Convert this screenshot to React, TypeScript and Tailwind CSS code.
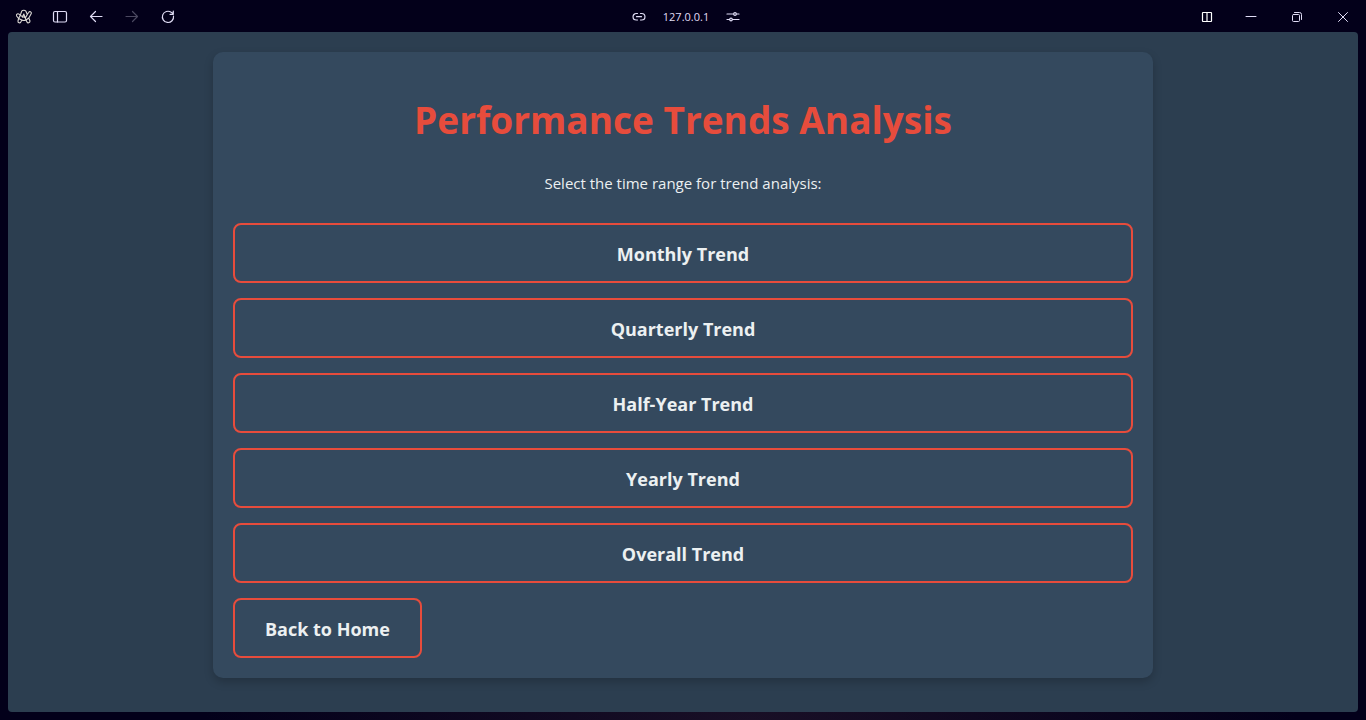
const trends = ['Monthly Trend', 'Quarterly Trend', 'Half-Year Trend', 'Yearly Trend', 'Overall Trend'];

const chromeButton = 'flex h-8 w-9 items-center justify-center';
const windowButton = 'flex h-8 w-[46px] items-center justify-center';
const linkButton =
  'rounded-lg border-2 border-[#e74c3c] text-center text-[18px] leading-6 font-bold text-[#ecf0f1] px-[30px] pt-[17px] pb-[15px] bg-[#34495e]';

function Icon({ size = 16, className = '', children }: { size?: number; className?: string; children: React.ReactNode }) {
  return (
    <svg width={size} height={size} viewBox={`0 0 ${size} ${size}`} fill="none" stroke="currentColor" strokeWidth="1.2" strokeLinecap="round" strokeLinejoin="round" className={className} aria-hidden="true">
      {children}
    </svg>
  );
}

export default function App() {
  return (
    <div className="flex min-h-screen flex-col bg-[#03001a] bg-[radial-gradient(ellipse_40%_20%_at_55%_100%,#190f26,#03001a)] font-['Open_Sans',sans-serif] text-[#ecf0f1]">
      <header className="grid h-8 grid-cols-3 items-center text-[#e0dcf5]">
        <nav className="flex items-center pt-px pl-[6px]">
          <button aria-label="Menu" className={chromeButton + ' text-[#dedad6]'}>
            <Icon size={18}>
              <path strokeWidth="1.1" d="M6.800 3C7.500 2 10 2 10.800 3L12.300 6.500 13.800 4.300C14.500 3 16.800 3.600 16.300 5.600L13.800 10 15 13C15 15 12.600 15.500 12 14L11 12C9.500 12.600 8 12.600 6.800 12L5.800 14C5 15.500 2.600 15 3 13L3.600 10.500 1.600 8C1 6 3 5.200 4 6.200L5.200 7.400ZM5.200 7.400L3.600 10.500M5.200 7.400L10.500 9.800 12.300 6.500M8.800 6L7.400 9.300M8.800 6L11 12M3.600 10.500L6.800 12M11 12L13.800 10" />
            </Icon>
          </button>
          <button aria-label="Sidebar" className={chromeButton}>
            <Icon>
              <rect x="1.500" y="2.500" width="13" height="10.500" rx="1.500" />
              <path d="M5.500 2.500v10.500" />
            </Icon>
          </button>
          <button aria-label="Back" className={chromeButton}>
            <Icon><path d="M14 7.500H2.500M7.500 2.500L2.500 7.500l5 5" /></Icon>
          </button>
          <button aria-label="Forward" className={chromeButton + ' text-[#4b4860]'}>
            <Icon><path d="M2 7.500h11.500M8.500 2.500l5 5-5 5" /></Icon>
          </button>
          <button aria-label="Reload" className={chromeButton}>
            <Icon><path d="M13.500 7a5.600 5.600 0 1 1-2.300-3.700L13 4.500M13.300 2v3.300H10" /></Icon>
          </button>
        </nav>
        <div className="flex items-center justify-center gap-[17px] pt-px pl-[6px] text-[11px]">
          <Icon size={14}><path d="M5.500 3.500H4.300a3.200 3.200 0 0 0 0 6.500h1.200M8.500 3.500h1.200a3.200 3.200 0 0 1 0 6.500H8.500M4.500 6.700h5" /></Icon>
          <span>127.0.0.1</span>
          <Icon size={14}><path d="M1 4h6.500M10.500 4H13M1 9.500h2.500M6.500 9.500H13" /><circle cx="9" cy="4" r="1.300" /><circle cx="5" cy="9.500" r="1.300" /></Icon>
        </div>
        <div className="flex items-center justify-end">
          <button aria-label="Split view" className="mr-[3px] flex h-8 w-9 items-center justify-center pt-px text-white"><Icon size={12}><rect x="1.500" y="1.500" width="9" height="9" rx="0.500" /><path d="M6 1.500v9" /></Icon></button>
          <button aria-label="Minimize" className={windowButton}><Icon size={12}><path d="M1 5.500h10" strokeWidth="1" /></Icon></button>
          <button aria-label="Restore" className={windowButton}><Icon size={12}><g strokeWidth="1"><rect x="1.500" y="3.500" width="7" height="7" rx="1" /><path d="M3.500 1.500h5a2 2 0 0 1 2 2v5" /></g></Icon></button>
          <button aria-label="Close" className={windowButton}><Icon size={12}><path d="M1.500 1.500l9 9M10.500 1.500l-9 9" strokeWidth="1" /></Icon></button>
        </div>
      </header>
      <main className="mx-2 mb-2 grow rounded bg-[#2c3e50] p-5">
        <section className="mx-auto flex max-w-[940px] flex-col rounded-[10px] bg-[#34495e] p-5 shadow-[0_4px_10px_rgba(0,0,0,0.2)]">
          <h1 className="mt-5 text-center text-[37px] leading-[56px] font-bold text-[#e74c3c]">Performance Trends Analysis</h1>
          <p className="mt-[23px] mb-7 text-center text-[15px] leading-6">Select the time range for trend analysis:</p>
          <nav className="flex flex-col items-stretch gap-[15px]">
            {trends.map((t) => (
              <a key={t} href="#" className={linkButton}>{t}</a>
            ))}
            <a href="#" className={linkButton + ' self-start'}>Back to Home</a>
          </nav>
        </section>
      </main>
    </div>
  );
}
